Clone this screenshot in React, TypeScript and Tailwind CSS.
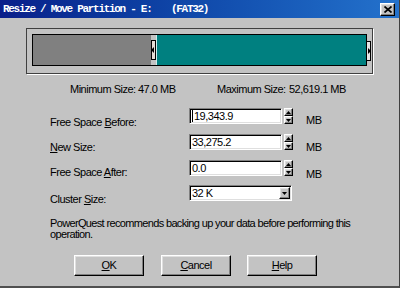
import React from "react";

const raised =
  "border border-t-white border-l-white border-r-black border-b-black shadow-[inset_-1px_-1px_0_#808080,inset_1px_1px_0_#dfdfdf] bg-[#c3c3c3]";
const sunken =
  "border border-t-[#808080] border-l-[#808080] border-r-white border-b-white shadow-[inset_1px_1px_0_#000,inset_-1px_-1px_0_#dfdfdf] bg-white";

function U({ children }: { children: React.ReactNode }) {
  return <span className="underline underline-offset-[1px]">{children}</span>;
}

function Spinner() {
  return (
    <div className="ml-[2px] w-[9px] h-[16px] flex flex-col">
      <div className={`${raised} h-[8px] flex items-center justify-center`}>
        <svg width="5" height="3" viewBox="0 0 5 3"><path d="M2.5 0L5 3H0z" fill="#000" /></svg>
      </div>
      <div className={`${raised} h-[8px] flex items-center justify-center`}>
        <svg width="5" height="3" viewBox="0 0 5 3"><path d="M0 0H5L2.5 3z" fill="#000" /></svg>
      </div>
    </div>
  );
}

function NumRow({
  label,
  value,
  labelMt,
  mbMt,
  mt,
  caret,
}: {
  label: React.ReactNode;
  value: string;
  labelMt: string;
  mbMt: string;
  mt: string;
  caret?: boolean;
}) {
  return (
    <div className={`flex items-start h-[16px] ml-[50px] ${mt}`}>
      <div className={`w-[139px] shrink-0 leading-[12px] ${labelMt}`}>{label}</div>
      <div className={`${sunken} w-[93px] shrink-0 h-[16px] flex items-center pl-[2px] leading-[12px]`}>
        {caret && <span className="w-px h-[12px] bg-black mr-[1px]" />}
        <span>{value}</span>
      </div>
      <Spinner />
      <div className={`ml-[13px] leading-[12px] ${mbMt}`}>MB</div>
    </div>
  );
}

export default function App() {
  return (
    <div className="w-[400px] h-[288px] bg-[#c3c3c3] flex flex-col overflow-hidden border-r border-r-[#404040] border-b-2 border-b-[#505050] font-['Liberation_Sans',Arial,sans-serif] text-[11px] text-black tracking-[-0.5px]">
      {/* Title bar */}
      <div className="h-[18px] flex items-center bg-linear-to-r from-[#0a1e8a] to-[#2472cc] pl-[3px] pr-[4px] shrink-0">
        <div className="flex items-center font-mono font-bold text-[11px] tracking-[-1.3px] text-white whitespace-pre leading-[12px]">
          <span className="w-[168px] shrink-0">Resize / Move Partition - E:</span>
          <span>(FAT32)</span>
        </div>
        <div className={`${raised} ml-auto w-[15px] h-[13px] flex items-center justify-center`}>
          <svg width="8" height="7" viewBox="0 0 8 7">
            <path d="M0.5 0.5L7.5 6.5M7.5 0.5L0.5 6.5" stroke="#000" strokeWidth="1.7" />
          </svg>
        </div>
      </div>

      {/* Partition frame */}
      <div className="mt-[10px] ml-[26px] w-[347px] h-[46px] border border-[#404040] shadow-[1px_1px_0_#fff] pt-[5px] pl-[5px] flex items-start shrink-0">
        <div className="w-[335px] h-[32px] border border-black flex items-center">
          <div className="w-[118px] self-stretch bg-[#808080]" />
          <div className="relative w-[5px] h-[20px] bg-[#e6ddd6] border border-black">
            <svg className="absolute left-[-1px] top-[6px]" width="3" height="6" viewBox="0 0 3 6">
              <path d="M0 3L3 0V6z" fill="#000" />
            </svg>
          </div>
          <div className="flex-1 self-stretch bg-[#008080] border-l border-l-[#cfeeee]" />
        </div>
        <div className="relative -ml-[1px] mt-[7px] w-[5px] h-[20px] bg-[#e6e6e6] border border-black">
          <svg className="absolute right-[-1px] top-[6px]" width="3" height="6" viewBox="0 0 3 6">
            <path d="M3 3L0 0V6z" fill="#000" />
          </svg>
        </div>
      </div>

      {/* Min / Max */}
      <div className="mt-[9px] h-[12px] leading-[12px] flex shrink-0 whitespace-nowrap">
        <span className="ml-[70px] w-[68px] shrink-0">Minimum Size:</span>
        <span className="w-[79px] shrink-0">47.0 MB</span>
        <span className="w-[72px] shrink-0">Maximum Size:</span>
        <span>52,619.1 MB</span>
      </div>

      <NumRow
        mt="mt-[13px]"
        labelMt="mt-[8px]"
        mbMt="mt-[6px]"
        caret
        label={<>Free Space <U>B</U>efore:</>}
        value="19,343.9"
      />
      <NumRow
        mt="mt-[10px]"
        labelMt="mt-[7px]"
        mbMt="mt-[7px]"
        label={<><U>N</U>ew Size:</>}
        value="33,275.2"
      />
      <NumRow
        mt="mt-[10px]"
        labelMt="mt-[6px]"
        mbMt="mt-[8px]"
        label={<>Free Space <U>A</U>fter:</>}
        value="0.0"
      />

      {/* Cluster size */}
      <div className="flex items-start h-[16px] ml-[50px] mt-[9px] shrink-0">
        <div className="w-[139px] shrink-0 leading-[12px] mt-[8px]">
          Cluster <U>S</U>ize:
        </div>
        <div className={`${sunken} w-[103px] h-[16px] flex items-center pl-[2px] pr-[1px] leading-[12px]`}>
          <span className="flex-1">32 K</span>
          <div className={`${raised} w-[11px] h-[12px] flex items-center justify-center`}>
            <svg width="5" height="3" viewBox="0 0 5 3"><path d="M0 0H5L2.5 3z" fill="#000" /></svg>
          </div>
        </div>
      </div>

      {/* Paragraph */}
      <div className="ml-[50px] mt-[17px] leading-[11px] w-[320px] shrink-0 tracking-[-0.65px] whitespace-nowrap">
        PowerQuest recommends backing up your data before performing this
        <br />
        operation.
      </div>

      {/* Buttons */}
      <div className="flex mt-[15px] shrink-0">
        <div className={`${raised} ml-[74px] w-[70px] h-[21px] flex items-center justify-center`}>
          <U>O</U>K
        </div>
        <div className={`${raised} ml-[17px] w-[70px] h-[21px] flex items-center justify-center`}>
          <U>C</U>ancel
        </div>
        <div className={`${raised} ml-[16px] w-[70px] h-[21px] flex items-center justify-center`}>
          <U>H</U>elp
        </div>
      </div>
    </div>
  );
}
